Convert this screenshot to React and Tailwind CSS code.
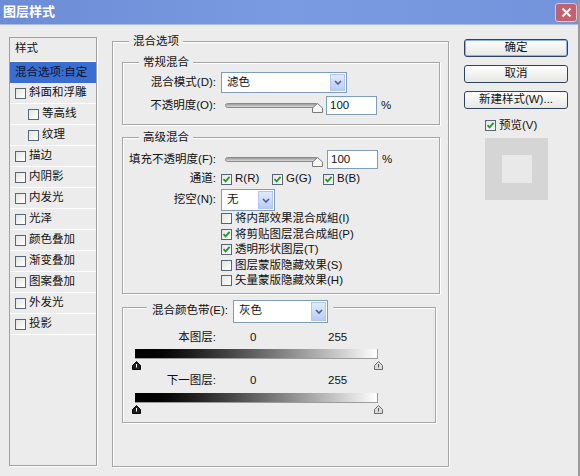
import React from 'react';

const Check = ({ on }) => (
  <span className="inline-flex w-[11px] h-[11px] shrink-0 items-center justify-center border border-[#55657a] bg-linear-to-br from-[#e4e4e0] to-white">
    {on && (
      <svg width="9" height="9" viewBox="0 0 9 9">
        <path d="M1.5 4.2 L3.6 6.4 L7.6 1.8" stroke="#1f9a25" strokeWidth="1.8" fill="none" />
      </svg>
    )}
  </span>
);

const Chevron = () => (
  <svg width="8" height="5" viewBox="0 0 8 5">
    <path d="M1 1 L4 4 L7 1" stroke="#4a5f86" strokeWidth="1.6" fill="none" />
  </svg>
);

const Select = ({ value, className }) => (
  <div className={`flex items-stretch bg-white border border-[#7f9db9] ${className}`}>
    <span className="flex-1 pl-[5px] flex items-center">{value}</span>
    <span className="w-[15px] m-px flex items-center justify-center border border-[#b2c6ee] bg-linear-to-b from-[#e2ebfd] to-[#b7ccf5]">
      <Chevron />
    </span>
  </div>
);

const Slider = () => (
  <div className="relative w-[96px] h-[19px]">
    <div className="absolute left-0 top-[7px] w-[94px] h-[5px] rounded-full border border-[#8a8a8a] bg-linear-to-b from-[#9c9c9c] to-[#dadada]" />
    <svg className="absolute left-[87px] top-[7px]" width="11" height="10" viewBox="0 0 11 10">
      <path d="M5.5 0.5 L10.5 5 L10.5 9.5 L0.5 9.5 L0.5 5 Z" fill="#f6f6f6" stroke="#7a7a7a" />
    </svg>
  </div>
);

const NumBox = () => (
  <div className="w-[51px] h-[19px] bg-white border border-[#7f9db9] pl-[3px] flex items-center">100</div>
);

const Thumb = ({ dark }) => (
  <svg width="9" height="9" viewBox="0 0 9 9">
    <path
      d="M4.5 0.5 L8.5 4.5 L8.5 8.5 L0.5 8.5 L0.5 4.5 Z"
      fill={dark ? '#1e1e1e' : '#dcdcdc'}
      stroke={dark ? '#000' : '#6c6c6c'}
    />
    <path d="M4.5 3 L4.5 6.5" stroke={dark ? '#fff' : '#555'} strokeWidth="1" />
  </svg>
);

const GroupBox = ({ title, className, children }) => (
  <div className={`border border-[#a6a6a6] shadow-[inset_1px_1px_0_#fff,1px_1px_0_#fff] ${className}`}>
    <div className="-mt-[9px] flex">
      <span className="ml-[16px] px-[4px] bg-[#ececec] leading-[16px]">{title}</span>
    </div>
    {children}
  </div>
);

const styleItems = [
  { label: '斜面和浮雕' },
  { label: '等高线', indent: true },
  { label: '纹理', indent: true },
  { label: '描边' },
  { label: '内阴影' },
  { label: '内发光' },
  { label: '光泽' },
  { label: '颜色叠加' },
  { label: '渐变叠加' },
  { label: '图案叠加' },
  { label: '外发光' },
  { label: '投影' },
];

const advancedChecks = [
  { label: '将内部效果混合成組(I)', on: false },
  { label: '将剪贴图层混合成組(P)', on: true },
  { label: '透明形状图层(T)', on: true },
  { label: '图层蒙版隐藏效果(S)', on: false },
  { label: '矢量蒙版隐藏效果(H)', on: false },
];

const Button = ({ children, primary }) => (
  <div
    className={`h-[18px] w-[104px] rounded-[3px] border border-[#2d4366] flex items-center justify-center bg-linear-to-b from-white to-[#e6e6e2] ${
      primary ? 'shadow-[inset_0_0_0_1px_#8fb0ea]' : ''
    }`}
  >
    {children}
  </div>
);

export default function App() {
  return (
    <div className="w-[580px] h-[476px] bg-[#ececec] text-[11.5px] text-[#111] font-['Liberation_Sans','Noto_Sans_CJK_SC',sans-serif] border-r-2 border-[#9a9a9a] overflow-hidden">
      {/* title bar */}
      <div className="h-[25px] flex items-center justify-between bg-linear-to-r from-[#6c8cd6] via-[#7a9ae1] to-[#7393dc] border-b border-[#a9bde9]">
        <span className="ml-[3px] text-white font-bold text-[13px]">图层样式</span>
        <span className="mr-[1px] w-[22px] h-[19px] rounded-[3px] border border-[#e6c0c4] bg-[#c1636f] flex items-center justify-center">
          <svg width="11" height="11" viewBox="0 0 11 11">
            <path d="M1.5 1.5 L9.5 9.5 M9.5 1.5 L1.5 9.5" stroke="#fff" strokeWidth="2" />
          </svg>
        </span>
      </div>

      <div className="flex">
        {/* left list */}
        <div className="ml-[9px] mt-[12px] w-[88px] h-[429px] border border-[#a0a0a0] shadow-[1px_1px_0_#fff]">
          <div className="h-[24px] pl-[5px] pt-[2px] border-b border-white">样式</div>
          <div className="h-[21px] pl-[5px] flex items-center bg-[#3a6dd0] text-[#0b1230]">混合选项:自定</div>
          {styleItems.map((item) => (
            <div
              key={item.label}
              className={`h-[21px] flex items-center gap-[3px] border-b border-white ${item.indent ? 'pl-[18px]' : 'pl-[5px]'}`}
            >
              <Check />
              <span>{item.label}</span>
            </div>
          ))}
        </div>

        {/* main group */}
        <GroupBox title="混合选项" className="ml-[15px] mt-[16px] w-[337px] h-[426px]">
          <div className="pl-[9px]">
            <GroupBox title="常规混合" className="mt-[13px] w-[318px] pb-[9px]">
              <div className="mt-[2px] flex items-center h-[21px]">
                <span className="w-[93px] text-right">混合模式(D):</span>
                <Select value="滤色" className="ml-[5px] w-[126px] h-[21px]" />
              </div>
              <div className="mt-[3px] flex items-center h-[19px]">
                <span className="w-[93px] text-right">不透明度(O):</span>
                <div className="ml-[9px]">
                  <Slider />
                </div>
                <div className="ml-[5px]">
                  <NumBox />
                </div>
                <span className="ml-[4px]">%</span>
              </div>
            </GroupBox>

            <GroupBox title="高级混合" className="mt-[12px] w-[318px] pb-[4px]">
              <div className="mt-[5px] flex items-center h-[19px]">
                <span className="w-[93px] text-right">填充不透明度(F):</span>
                <div className="ml-[9px]">
                  <Slider />
                </div>
                <div className="ml-[6px]">
                  <NumBox />
                </div>
                <span className="ml-[4px]">%</span>
              </div>
              <div className="flex items-center h-[20px]">
                <span className="w-[93px] text-right">通道:</span>
                <div className="ml-[5px] flex">
                  {['R(R)', 'G(G)', 'B(B)'].map((c) => (
                    <span key={c} className="w-[51px] flex items-center gap-[3px]">
                      <Check on />
                      {c}
                    </span>
                  ))}
                </div>
              </div>
              <div className="flex items-center h-[22px]">
                <span className="w-[93px] text-right">挖空(N):</span>
                <Select value="无" className="ml-[5px] w-[54px] h-[22px]" />
              </div>
              <div className="ml-[98px]">
                {advancedChecks.map((c) => (
                  <div key={c.label} className="h-[15.5px] flex items-center gap-[3px]">
                    <Check on={c.on} />
                    <span>{c.label}</span>
                  </div>
                ))}
              </div>
            </GroupBox>

            {/* blend if */}
            <div className="mt-[13px] w-[314px] pb-[8px] border border-[#a6a6a6] shadow-[inset_1px_1px_0_#fff,1px_1px_0_#fff]">
              <div className="-mt-[8px] flex">
                <div className="ml-[24px] px-[5px] bg-[#ececec] flex items-center h-[23px]">
                  <span>混合颜色带(E):</span>
                  <Select value="灰色" className="ml-[5px] w-[95px] h-[23px]" />
                </div>
              </div>
              <div className="mt-[7px] h-[16px] flex items-center">
                <span className="w-[93px] text-right">本图层:</span>
                <span className="ml-[34px] w-[78px]">0</span>
                <span>255</span>
              </div>
              <div className="mt-[3px] ml-[12px] w-[243px] h-[10px] border-r border-b border-[#9c9c9c] bg-linear-to-r from-black to-white" />
              <div className="mt-[2px] ml-[9px] h-[9px] flex">
                <Thumb dark />
                <span className="ml-[233px]">
                  <Thumb />
                </span>
              </div>
              <div className="mt-[3px] h-[16px] flex items-center">
                <span className="w-[93px] text-right">下一图层:</span>
                <span className="ml-[34px] w-[78px]">0</span>
                <span>255</span>
              </div>
              <div className="mt-[4px] ml-[12px] w-[243px] h-[10px] border-r border-b border-[#9c9c9c] bg-linear-to-r from-black to-white" />
              <div className="mt-[2px] ml-[9px] h-[9px] flex">
                <Thumb dark />
                <span className="ml-[233px]">
                  <Thumb />
                </span>
              </div>
            </div>
          </div>
        </GroupBox>

        {/* right column */}
        <div className="ml-[15px] mt-[14px] w-[104px]">
          <Button primary>确定</Button>
          <div className="mt-[8px]">
            <Button>取消</Button>
          </div>
          <div className="mt-[8px]">
            <Button>新建样式(W)...</Button>
          </div>
          <div className="mt-[10px] ml-[21px] h-[13px] flex items-center gap-[3px]">
            <Check on />
            <span>预览(V)</span>
          </div>
          <div className="mt-[6px] ml-[21px] w-[63px] h-[62px] bg-[#d5d5d5] flex items-center justify-center">
            <div className="w-[30px] h-[28px] bg-[#e9e9e9]" />
          </div>
        </div>
      </div>
    </div>
  );
}
